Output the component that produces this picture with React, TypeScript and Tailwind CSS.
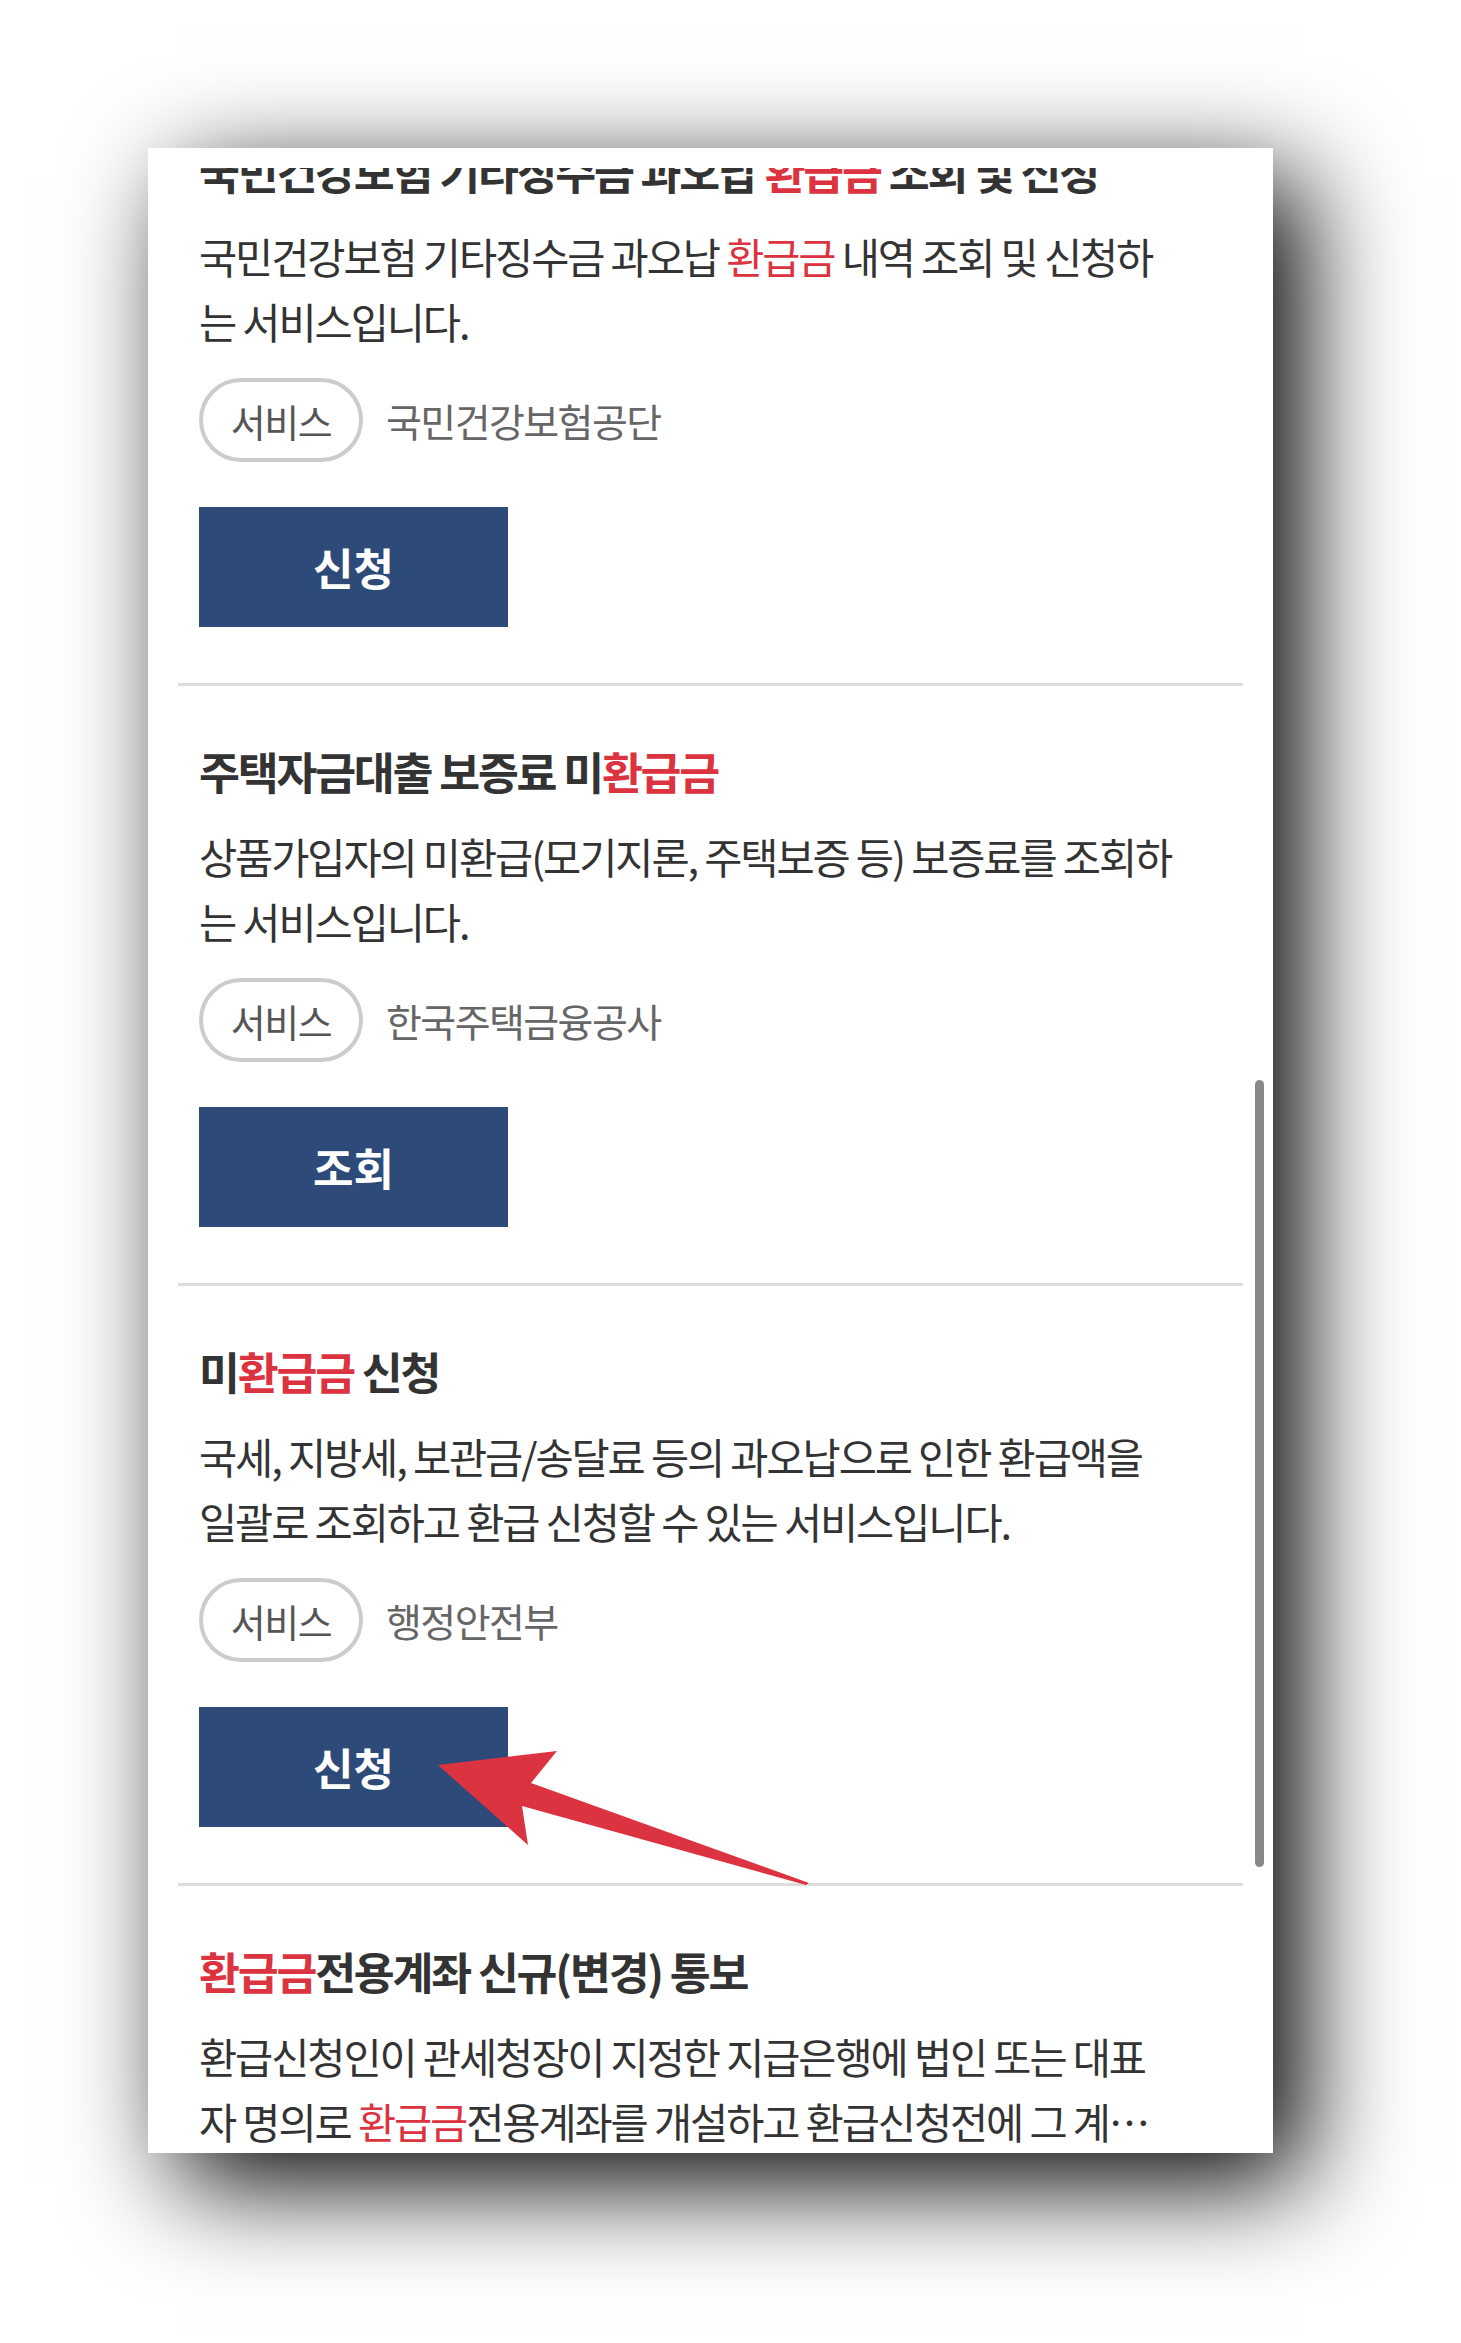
import React from "react";

type Part = { t: string; red?: boolean };

type Service = {
  title: Part[];
  lines: Part[][];
  org?: string;
  action?: string;
};

const services: Service[] = [
  {
    title: [{ t: "국민건강보험 기타징수금 과오납 " }, { t: "환급금", red: true }, { t: " 조회 및 신청" }],
    lines: [
      [{ t: "국민건강보험 기타징수금 과오납 " }, { t: "환급금", red: true }, { t: " 내역 조회 및 신청하" }],
      [{ t: "는 서비스입니다." }],
    ],
    org: "국민건강보험공단",
    action: "신청",
  },
  {
    title: [{ t: "주택자금대출 보증료 미" }, { t: "환급금", red: true }],
    lines: [[{ t: "상품가입자의 미환급(모기지론, 주택보증 등) 보증료를 조회하" }], [{ t: "는 서비스입니다." }]],
    org: "한국주택금융공사",
    action: "조회",
  },
  {
    title: [{ t: "미" }, { t: "환급금", red: true }, { t: " 신청" }],
    lines: [
      [{ t: "국세, 지방세, 보관금/송달료 등의 과오납으로 인한 환급액을" }],
      [{ t: "일괄로 조회하고 환급 신청할 수 있는 서비스입니다." }],
    ],
    org: "행정안전부",
    action: "신청",
  },
  {
    title: [{ t: "환급금", red: true }, { t: "전용계좌 신규(변경) 통보" }],
    lines: [
      [{ t: "환급신청인이 관세청장이 지정한 지급은행에 법인 또는 대표" }],
      [{ t: "자 명의로 " }, { t: "환급금", red: true }, { t: "전용계좌를 개설하고 환급신청전에 그 계…" }],
    ],
  },
];

function Text({ parts }: { parts: Part[] }) {
  return (
    <>
      {parts.map((p, i) =>
        p.red ? (
          <span key={i} className="text-[#dc3340]">
            {p.t}
          </span>
        ) : (
          <span key={i}>{p.t}</span>
        )
      )}
    </>
  );
}

function ServiceItem({ s }: { s: Service }) {
  return (
    <li className="border-t-[3px] border-[#dddddd] px-[21px] pt-[53px] pb-[56px]">
      <h3 className="text-[44.5px] leading-[64px] font-bold text-[#333333] tracking-[-0.05em] whitespace-nowrap">
        <Text parts={s.title} />
      </h3>
      <p className="mt-[21px] text-[41.5px] leading-[65px] text-[#333333] tracking-[-0.05em] whitespace-nowrap">
        {s.lines.map((l, i) => (
          <span key={i} className="block">
            <Text parts={l} />
          </span>
        ))}
      </p>
      {s.org && (
        <div className="mt-[24px] flex items-center gap-[23px]">
          <span className="flex h-[84px] w-[164px] items-center justify-center rounded-full border-4 border-[#cccccc] text-[38px] text-[#555555] tracking-[-0.04em]">
            서비스
          </span>
          <span className="text-[39px] text-[#666666] tracking-[-0.04em]">{s.org}</span>
        </div>
      )}
      {s.action && (
        <button className="mt-[45px] flex h-[120px] w-[309px] items-center justify-center bg-[#2e4a78] text-[44px] font-bold text-white">
          {s.action}
        </button>
      )}
    </li>
  );
}

export default function App() {
  return (
    <div className="relative h-[2343px] w-[1461px] overflow-hidden bg-white pl-[148px] pt-[148px] font-['Noto_Sans_CJK_KR','Noto_Sans',sans-serif]">
      <div className="relative h-[2005px] w-[1125px] overflow-hidden bg-white shadow-[30px_30px_100px_rgba(0,0,0,1)]">
        <ul className="mx-[30px] -mt-[65px]">
          {services.map((s, i) => (
            <ServiceItem key={i} s={s} />
          ))}
        </ul>
        {/* header edge covering the scrolled list */}
        <div className="absolute left-0 top-0 h-[20px] w-full bg-white" />
        {/* scrollbar */}
        <div className="absolute left-[1107px] top-[932px] h-[787px] w-[9px] rounded-full bg-[#888888]" />
      </div>

      {/* red annotation arrow */}
      <svg className="absolute left-0 top-0" width="1461" height="2343" viewBox="0 0 1461 2343">
        <polygon
          points="438,1765 557,1751 531,1783 809,1883 806,1885 522,1806 528,1845"
          fill="#dc3340"
        />
      </svg>
    </div>
  );
}
